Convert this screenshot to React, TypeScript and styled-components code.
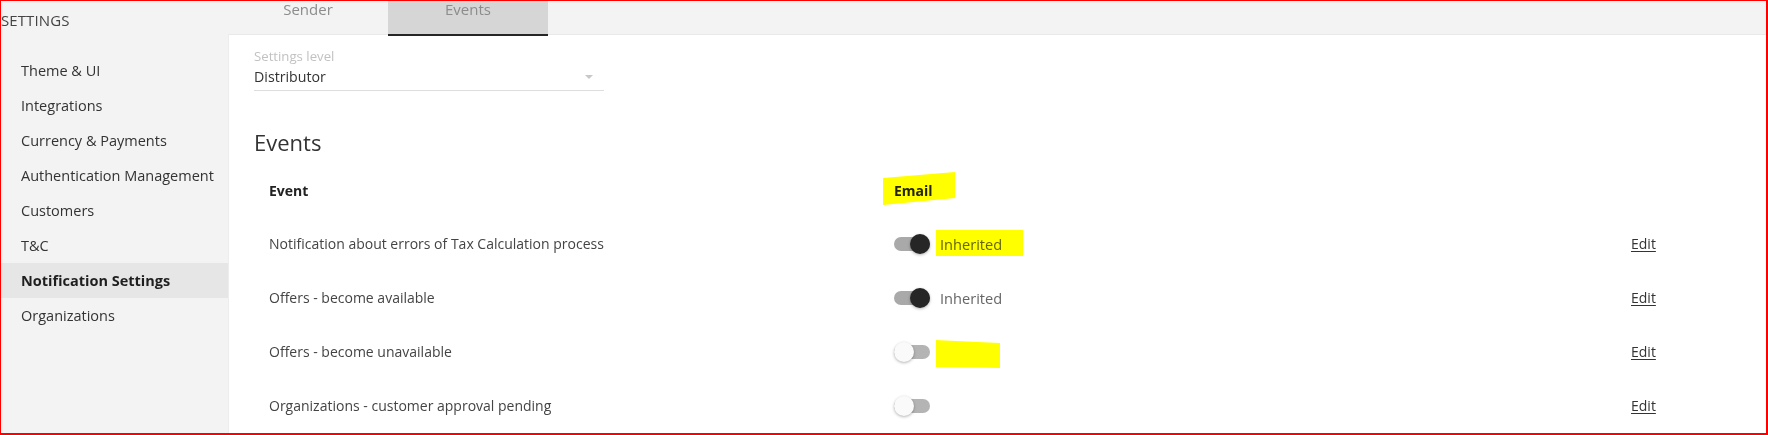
import styled, { createGlobalStyle } from 'styled-components';

const GlobalStyle = createGlobalStyle`
  body {
    margin: 0;
    font-family: 'Open Sans', 'Noto Sans', sans-serif;
    background: #ffffff;
  }
`;

const Frame = styled.div`
  position: relative;
  width: 1768px;
  height: 435px;
  overflow: hidden;
  display: grid;
  grid-template-columns: 228px 1fr;
  grid-template-rows: 34px 1fr;
  background: #f3f3f3;
  color: #333;

  &::after {
    content: '';
    position: absolute;
    inset: 0;
    border-style: solid;
    border-color: #ff0000;
    border-width: 1px 2px 2px 1px;
    pointer-events: none;
    z-index: 10;
  }
`;

const Brand = styled.div`
  font-size: 15px;
  line-height: 20px;
  padding: 10px 0 0 1px;
  color: #444;
  letter-spacing: 0.1px;
`;

const TabBar = styled.div`
  display: flex;
`;

const Tab = styled.div<{ $active?: boolean }>`
  position: relative;
  z-index: 1;
  width: 160px;
  height: 36px;
  box-sizing: border-box;
  text-align: center;
  font-size: 15px;
  line-height: 18px;
  color: #8c8c8c;
  background: ${({ $active }) => ($active ? '#d6d6d6' : 'transparent')};
  border-bottom: 2px solid ${({ $active }) => ($active ? '#262626' : 'transparent')};
`;

const Sidebar = styled.nav`
  padding-top: 19px;
`;

const NavItem = styled.div<{ $active?: boolean }>`
  height: 35px;
  line-height: 36px;
  padding-left: 21px;
  font-size: 14.5px;
  color: ${({ $active }) => ($active ? '#1f1f1f' : '#333')};
  font-weight: ${({ $active }) => ($active ? 700 : 400)};
  background: ${({ $active }) => ($active ? '#e6e6e6' : 'transparent')};
`;

const Panel = styled.main`
  background: #ffffff;
  border-top: 1px solid #e9e9e9;
  border-left: 1px solid #ededed;
  padding: 12px 0 0 25px;
`;

const FieldLabel = styled.div`
  font-size: 13.2px;
  line-height: 18px;
  color: #c2c2c2;
`;

const Select = styled.div`
  width: 350px;
  box-sizing: border-box;
  display: flex;
  align-items: center;
  justify-content: space-between;
  padding: 2px 11px 3px 0;
  border-bottom: 1px solid #dedede;
  font-size: 14.2px;
  line-height: 20px;
  color: #333;
`;

const Caret = styled.span`
  width: 0;
  height: 0;
  border-left: 4px solid transparent;
  border-right: 4px solid transparent;
  border-top: 4px solid #c8c8c8;
`;

const Heading = styled.h2`
  margin: 37px 0 0;
  font-size: 22px;
  line-height: 28px;
  font-weight: 400;
  color: #333;
`;

const Table = styled.div`
  margin-top: 9px;
`;

const Row = styled.div<{ $head?: boolean }>`
  display: grid;
  grid-template-columns: 625px 737px 1fr;
  height: ${({ $head }) => ($head ? '52px' : '54px')};
  font-size: 14px;
  line-height: 20px;
  font-weight: ${({ $head }) => ($head ? 700 : 400)};
  color: ${({ $head }) => ($head ? '#222' : '#444')};
`;

const Cell = styled.div`
  position: relative;
  display: flex;
  align-items: center;
  gap: 10px;
  padding-left: 15px;
`;

const Switch = styled.span<{ $on?: boolean }>`
  position: relative;
  width: 36px;
  height: 20px;
  flex: none;

  &::before {
    content: '';
    position: absolute;
    left: 0;
    top: 3px;
    width: 36px;
    height: 14px;
    border-radius: 7px;
    background: ${({ $on }) => ($on ? '#a9a9a9' : '#b4b4b4')};
  }

  &::after {
    content: '';
    position: absolute;
    top: 0;
    left: ${({ $on }) => ($on ? '16px' : '0')};
    width: 20px;
    height: 20px;
    border-radius: 50%;
    background: ${({ $on }) => ($on ? '#262626' : '#fafafa')};
    box-shadow: 0 1px 3px rgba(0, 0, 0, 0.3);
  }
`;

const Status = styled.span`
  font-size: 14.6px;
  color: #666;
`;

const EditLink = styled.a`
  color: #333;
  text-decoration: underline;
  text-underline-offset: 2px;
`;

const Mark = styled.span<{ $left: number; $top: number; $w: number; $h: number; $clip?: string }>`
  position: absolute;
  left: ${({ $left }) => $left}px;
  top: ${({ $top }) => $top}px;
  width: ${({ $w }) => $w}px;
  height: ${({ $h }) => $h}px;
  background: #ffff00;
  mix-blend-mode: multiply;
  clip-path: ${({ $clip }) => $clip || 'none'};
  pointer-events: none;
`;

type Mk = { left: number; top: number; w: number; h: number; clip?: string };

const navItems = [
  'Theme & UI',
  'Integrations',
  'Currency & Payments',
  'Authentication Management',
  'Customers',
  'T&C',
  'Notification Settings',
  'Organizations',
];

const events: { name: string; on: boolean; inherited: boolean; mark?: Mk }[] = [
  {
    name: 'Notification about errors of Tax Calculation process',
    on: true,
    inherited: true,
    mark: { left: 57, top: 13, w: 87, h: 26 },
  },
  { name: 'Offers - become available', on: true, inherited: true },
  {
    name: 'Offers - become unavailable',
    on: false,
    inherited: false,
    mark: { left: 57, top: 15, w: 64, h: 28, clip: 'polygon(0 0, 20px 1px, 64px 3px, 64px 28px, 0 27px)' },
  },
  { name: 'Organizations - customer approval pending', on: false, inherited: false },
];

export default function App() {
  return (
    <>
      <GlobalStyle />
      <Frame>
        <Brand>SETTINGS</Brand>
        <TabBar>
          <Tab>Sender</Tab>
          <Tab $active>Events</Tab>
        </TabBar>

        <Sidebar>
          {navItems.map((item) => (
            <NavItem key={item} $active={item === 'Notification Settings'}>
              {item}
            </NavItem>
          ))}
        </Sidebar>

        <Panel>
          <FieldLabel>Settings level</FieldLabel>
          <Select>
            <span>Distributor</span>
            <Caret />
          </Select>

          <Heading>Events</Heading>

          <Table>
            <Row $head>
              <Cell>Event</Cell>
              <Cell>
                Email
                <Mark
                  $left={4}
                  $top={7}
                  $w={72}
                  $h={33}
                  $clip="polygon(0 6px, 60px 1px, 72px 0, 72px 26px, 0 33px)"
                />
              </Cell>
              <Cell />
            </Row>
            {events.map((ev) => (
              <Row key={ev.name}>
                <Cell>{ev.name}</Cell>
                <Cell>
                  <Switch $on={ev.on} />
                  {ev.inherited && <Status>Inherited</Status>}
                  {ev.mark && (
                    <Mark $left={ev.mark.left} $top={ev.mark.top} $w={ev.mark.w} $h={ev.mark.h} $clip={ev.mark.clip} />
                  )}
                </Cell>
                <Cell>
                  <EditLink href="#">Edit</EditLink>
                </Cell>
              </Row>
            ))}
          </Table>
        </Panel>
      </Frame>
    </>
  );
}
